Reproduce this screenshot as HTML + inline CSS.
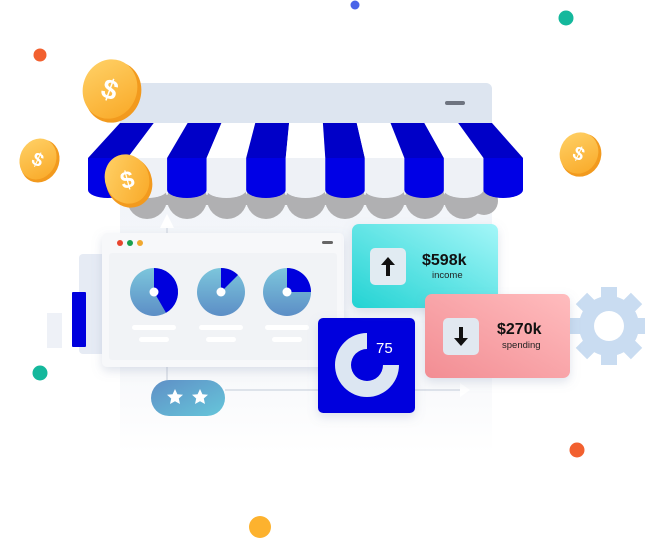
<!DOCTYPE html>
<html><head><meta charset="utf-8"><style>
html,body{margin:0;padding:0;background:#fff;}
body{width:645px;height:539px;overflow:hidden;position:relative;font-family:"Liberation Sans",sans-serif;}
svg{position:absolute;left:0;top:0;}
</style></head><body>
<svg width="645" height="539" viewBox="0 0 645 539" xmlns="http://www.w3.org/2000/svg">
<defs>
<linearGradient id="back" x1="0" y1="0" x2="0" y2="1"><stop offset="0" stop-color="#eef2f8"/><stop offset="0.8" stop-color="#f8f9fb"/><stop offset="1" stop-color="#ffffff"/></linearGradient>
<linearGradient id="pie" x1="0" y1="0" x2="0" y2="1"><stop offset="0" stop-color="#7cc6dc"/><stop offset="1" stop-color="#5c8ec6"/></linearGradient>
<linearGradient id="pill" x1="0" y1="0" x2="1" y2="1"><stop offset="0" stop-color="#5f8fc6"/><stop offset="1" stop-color="#66c6da"/></linearGradient>
<linearGradient id="inc" x1="0" y1="1" x2="1" y2="0"><stop offset="0" stop-color="#22d3d3"/><stop offset="1" stop-color="#a4f6f8"/></linearGradient>
<linearGradient id="spd" x1="0" y1="1" x2="1" y2="0"><stop offset="0" stop-color="#f28d93"/><stop offset="1" stop-color="#ffbcbe"/></linearGradient>
<linearGradient id="coin" x1="0" y1="0" x2="1" y2="1"><stop offset="0" stop-color="#ffd36a"/><stop offset="1" stop-color="#f9a724"/></linearGradient>
<linearGradient id="wh" x1="0" y1="0" x2="0" y2="1"><stop offset="0" stop-color="#ffffff"/><stop offset="1" stop-color="#e6ebf3"/></linearGradient>
<filter id="sh" x="-20%" y="-20%" width="140%" height="150%"><feDropShadow dx="0" dy="4" stdDeviation="5" flood-color="#8090b0" flood-opacity="0.25"/></filter>
</defs>
<!-- dots -->
<circle cx="40" cy="55" r="6.5" fill="#f2602f"/>
<circle cx="355" cy="5" r="4.5" fill="#4a64e8"/>
<circle cx="566" cy="18" r="7.5" fill="#14b89c"/>
<circle cx="40" cy="373" r="7.5" fill="#14b89c"/>
<circle cx="577" cy="450" r="7.5" fill="#f2602f"/>
<circle cx="260" cy="527" r="11" fill="#fdb22e"/>
<!-- store back -->
<rect x="120" y="83" width="372" height="370" rx="6" fill="url(#back)"/>
<rect x="120" y="83" width="372" height="45" rx="6" fill="#dde5f0"/>
<rect x="445" y="101" width="20" height="4" rx="2" fill="#6e7480"/>
<!-- lines -->
<line x1="167" y1="225" x2="167" y2="390" stroke="#d6dbe4" stroke-width="1.5"/>
<line x1="225" y1="390" x2="460" y2="390" stroke="#d6dbe4" stroke-width="1.5"/>
<polygon points="460,383 470,390 460,397" fill="#fff"/>
<polygon points="160,228 167,214 174,228" fill="#fff"/>
<!-- gray scallops -->
<g fill="#b0b0b2">
<rect x="120" y="195" width="372" height="10"/>
<circle cx="147" cy="199" r="20"/><circle cx="187" cy="199" r="20"/><circle cx="227" cy="199" r="20"/><circle cx="266" cy="199" r="20"/><circle cx="306" cy="199" r="20"/><circle cx="345" cy="199" r="20"/><circle cx="385" cy="199" r="20"/><circle cx="425" cy="199" r="20"/><circle cx="464" cy="199" r="20"/><circle cx="484" cy="201" r="14"/>
</g>
<!-- awning -->
<g id="aw"></g>
<!-- left bars -->
<rect x="79" y="254" width="30" height="100" rx="4" fill="#e6ebf4"/>
<rect x="47" y="313" width="15" height="35" fill="#eef1f7"/>
<rect x="72" y="292" width="14" height="55" rx="1" fill="#0000dd"/>
<!-- dashboard -->
<g filter="url(#sh)"><rect x="102" y="233" width="242" height="134" rx="5" fill="#f7f8fa"/></g>
<rect x="109" y="253" width="228" height="107" rx="3" fill="#f1f3f6"/>
<circle cx="120" cy="243" r="3" fill="#e8452e"/><circle cx="130" cy="243" r="3" fill="#19a04e"/><circle cx="140" cy="243" r="3" fill="#f0a830"/>
<rect x="322" y="241" width="11" height="3" rx="1.5" fill="#666"/>
<g>
<circle cx="154" cy="292" r="24" fill="url(#pie)"/>
<path d="M154 292 L154 268 A24 24 0 0 1 166 312.8 Z" fill="#0000dd"/>
<circle cx="154" cy="292" r="4.5" fill="#fff"/>
<circle cx="221" cy="292" r="24" fill="url(#pie)"/>
<path d="M221 292 L221 268 A24 24 0 0 1 238 275 Z" fill="#0000dd"/>
<circle cx="221" cy="292" r="4.5" fill="#fff"/>
<circle cx="287" cy="292" r="24" fill="url(#pie)"/>
<path d="M287 292 L287 268 A24 24 0 0 1 311 292 Z" fill="#0000dd"/>
<circle cx="287" cy="292" r="4.5" fill="#fff"/>
</g>
<g fill="#fff">
<rect x="132" y="325" width="44" height="5" rx="2.5"/><rect x="139" y="337" width="30" height="5" rx="2.5"/>
<rect x="199" y="325" width="44" height="5" rx="2.5"/><rect x="206" y="337" width="30" height="5" rx="2.5"/>
<rect x="265" y="325" width="44" height="5" rx="2.5"/><rect x="272" y="337" width="30" height="5" rx="2.5"/>
</g>
<!-- stars pill -->
<rect x="151" y="380" width="74" height="36" rx="18" fill="url(#pill)"/>
<g fill="#fff">
<polygon points="175,389 177.4,394.3 183,394.8 178.8,398.5 180,404 175,401.2 170,404 171.2,398.5 167,394.8 172.6,394.3"/>
<polygon points="200,389 202.4,394.3 208,394.8 203.8,398.5 205,404 200,401.2 195,404 196.2,398.5 192,394.8 197.6,394.3"/>
</g>
<!-- gear -->
<g fill="#c9dcf1" transform="translate(609,326)">
<circle r="30"/>
<g id="teeth">
<rect x="-8" y="-39" width="16" height="14"/>
<rect x="-8" y="-39" width="16" height="14" transform="rotate(45)"/>
<rect x="-8" y="-39" width="16" height="14" transform="rotate(90)"/>
<rect x="-8" y="-39" width="16" height="14" transform="rotate(135)"/>
<rect x="-8" y="-39" width="16" height="14" transform="rotate(180)"/>
<rect x="-8" y="-39" width="16" height="14" transform="rotate(225)"/>
<rect x="-8" y="-39" width="16" height="14" transform="rotate(270)"/>
<rect x="-8" y="-39" width="16" height="14" transform="rotate(315)"/>
</g>
<circle r="15" fill="#fff"/>
</g>
<!-- blue card -->
<g filter="url(#sh)"><rect x="318" y="318" width="97" height="95" rx="5" fill="#0000dd"/></g>
<path d="M367 333 A32 32 0 1 0 399 365 L383 365 A16 16 0 1 1 367 349 Z" fill="#dce6f2"/>
<text x="376" y="353" font-size="15" fill="#fff" font-family="Liberation Sans,sans-serif">75</text>
<!-- income -->
<g filter="url(#sh)"><rect x="352" y="224" width="146" height="84" rx="7" fill="url(#inc)"/></g>
<rect x="370" y="248" width="36" height="37" rx="5" fill="#e1ebf2"/>
<path d="M388 257 L381 265 L386 265 L386 276 L390 276 L390 265 L395 265 Z" fill="#111"/>
<text x="422" y="265" font-size="16" font-weight="bold" fill="#111">$598k</text>
<text x="432" y="278" font-size="9.5" fill="#222">income</text>
<!-- spending -->
<g filter="url(#sh)"><rect x="425" y="294" width="145" height="84" rx="7" fill="url(#spd)"/></g>
<rect x="443" y="318" width="36" height="37" rx="5" fill="#e1e8f0"/>
<path d="M461 346 L454 338 L459 338 L459 327 L463 327 L463 338 L468 338 Z" fill="#111"/>
<text x="497" y="334" font-size="16" font-weight="bold" fill="#111">$270k</text>
<text x="502" y="348" font-size="9.5" fill="#222">spending</text>
<!-- coins -->
<g>
<ellipse cx="113" cy="92" rx="28" ry="31" fill="#f29a1e" transform="rotate(20 113 92)"/>
<ellipse cx="110" cy="89" rx="27" ry="30" fill="url(#coin)" transform="rotate(20 110 89)"/>
<text x="110" y="99" font-size="28" font-weight="bold" fill="#fff" text-anchor="middle" transform="rotate(20 110 89)">$</text>
<ellipse cx="40" cy="161" rx="19" ry="22" fill="#f29a1e" transform="rotate(25 40 161)"/>
<ellipse cx="38" cy="159" rx="18" ry="21" fill="url(#coin)" transform="rotate(25 38 159)"/>
<text x="38" y="166" font-size="19" font-weight="bold" fill="#fff" text-anchor="middle" transform="rotate(25 38 159)">$</text>
<ellipse cx="581" cy="155" rx="20" ry="22" fill="#f29a1e" transform="rotate(25 581 155)"/>
<ellipse cx="579" cy="153" rx="19" ry="21" fill="url(#coin)" transform="rotate(25 579 153)"/>
<text x="579" y="160" font-size="19" font-weight="bold" fill="#fff" text-anchor="middle" transform="rotate(25 579 153)">$</text>
</g>
</svg>
<script>
(function(){
var g=document.getElementById('aw'),ns='http://www.w3.org/2000/svg',s='';
var bw=(523-88)/11,tw=(492-120)/11;
for(var i=0;i<11;i++){
 var tx0=120+i*tw,tx1=tx0+tw,bx0=88+i*bw,bx1=bx0+bw,blue=i%2==0;
 var top=blue?'#0000c8':'#ffffff',bot=blue?'#0000e6':'#eef1f6';
 s+='<polygon points="'+tx0+',123 '+tx1+',123 '+bx1+',158 '+bx0+',158" fill="'+top+'"/>';
 s+='<path d="M'+bx0+' 158 L'+bx1+' 158 L'+bx1+' 190 A'+(bw/2)+' 8 0 0 1 '+bx0+' 190 Z" fill="'+bot+'"/>';
}
g.innerHTML=s;
// coin 3 over awning
var c='<ellipse cx="129" cy="182" rx="23" ry="26" fill="#f29a1e" transform="rotate(-20 129 182)"/><ellipse cx="127" cy="179" rx="22" ry="25" fill="url(#coin)" transform="rotate(-20 127 179)"/><text x="127" y="188" font-size="24" font-weight="bold" fill="#fff" text-anchor="middle" transform="rotate(-15 127 179)">$</text>';
g.innerHTML+=c;
})();
</script>
</body></html>
